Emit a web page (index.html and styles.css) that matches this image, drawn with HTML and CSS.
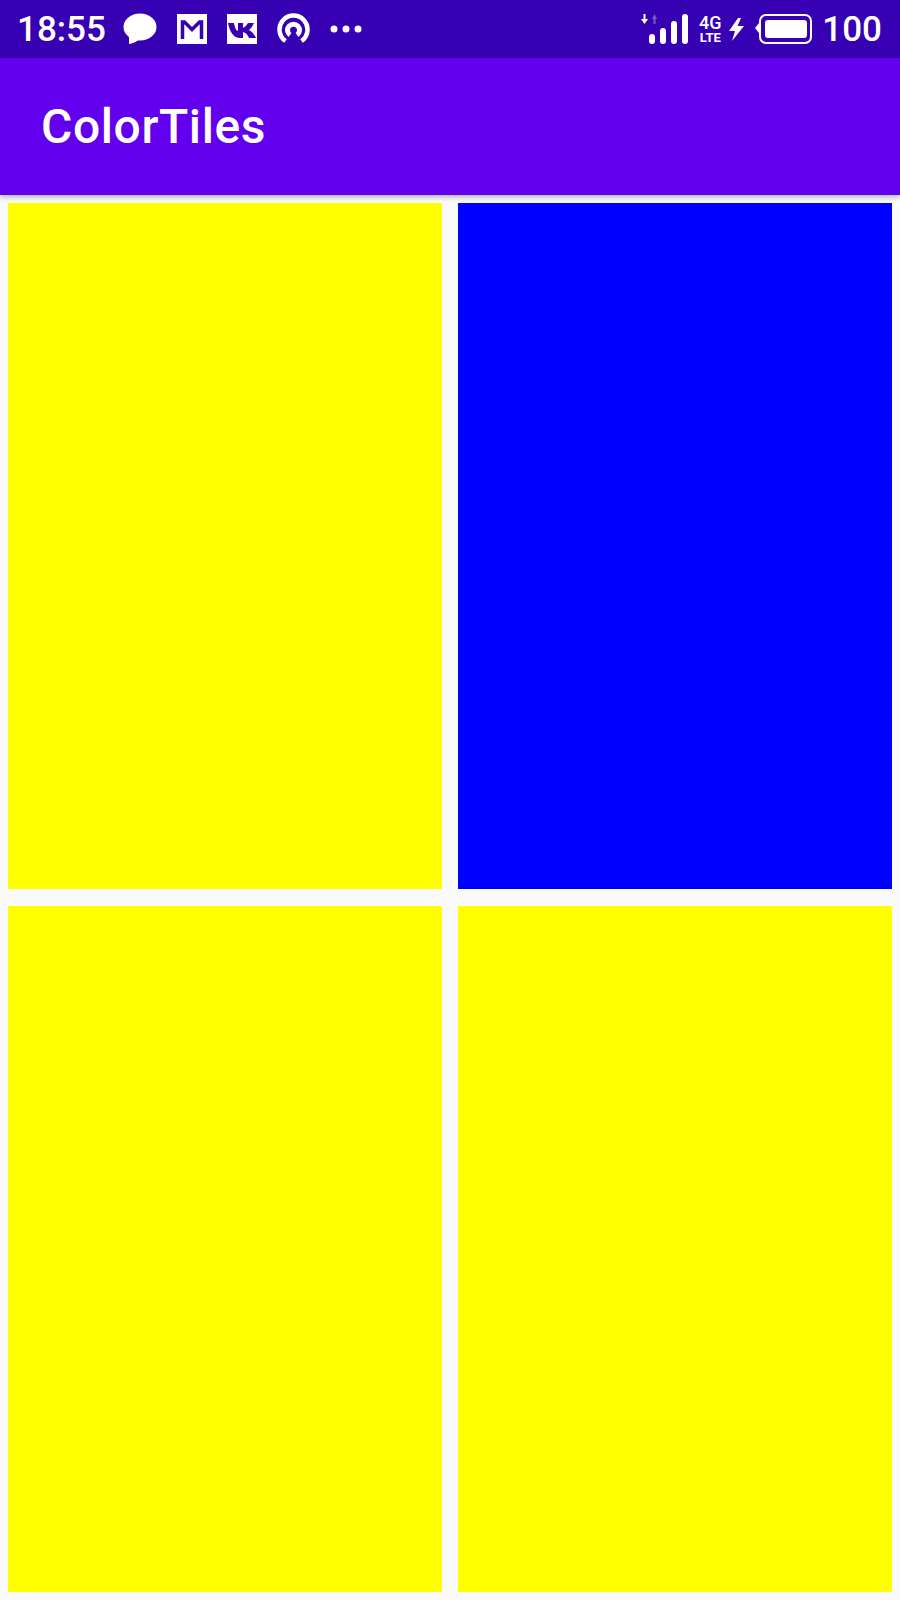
FILE: index.html
```html
<!DOCTYPE html>
<html lang="en">
  <head>
    <meta charset="UTF-8" />
    <meta name="viewport" content="width=device-width, initial-scale=1.0" />
    <title>ColorTiles</title>
    <link rel="stylesheet" href="styles.css">
  </head>
  <body>
    <div class="status-bar">
      <div class="status-left">
        <span class="status-text time">18:55</span>
        <svg class="icon" width="34" height="32" viewBox="0 0 34 32">
          <ellipse cx="17" cy="14" rx="16.5" ry="13.5" fill="#fff" />
          <path d="M6 22 L6 31 Q13 30 18 25 Z" fill="#fff" />
        </svg>
        <svg class="icon" width="30" height="30" viewBox="0 0 30 30">
          <rect width="30" height="30" fill="#fff" />
          <path d="M5.500 25 V8 H7.500 L15 15.500 L22.500 8 H24.500 V25" fill="none" stroke="#3700b3" stroke-width="3.500" />
        </svg>
        <svg class="icon" width="30" height="30" viewBox="0 0 30 30">
          <rect width="30" height="30" fill="#fff" />
          <path d="M1 9 H7 Q8 16 11 17 V9 H16 V14 Q19 13 21 9 H27 Q25 14 22 16 Q26 18 29 24 H22 Q20 19 16 18 V24 H13 Q4 24 1 9 Z" fill="#3700b3" />
          <path d="M30 11 Q26 15 26 16.500 Q26 19 30 22 Z" fill="#fff" />
        </svg>
        <svg class="icon" width="33" height="32" viewBox="0 0 33 32" fill="none" stroke="#fff">
          <path d="M8.500 28 A14 14 0 1 1 24.500 28" stroke-width="4.500" />
          <path d="M13 22 A6 6 0 1 1 20 22" stroke-width="5" />
        </svg>
        <svg class="icon" width="32" height="8" viewBox="0 0 32 8">
          <circle cx="4" cy="4" r="3.500" fill="#fff" />
          <circle cx="16" cy="4" r="3.500" fill="#fff" />
          <circle cx="28" cy="4" r="3.500" fill="#fff" />
        </svg>
      </div>
      <div class="status-right">
        <svg class="icon signal" width="47" height="30" viewBox="0 0 47 30">
          <path d="M2.500 0 H4.500 V5 H7 L3.500 10 L0 5 H2.500 Z" fill="#fff" />
          <path d="M12.500 10 H14.500 V5 H16 L13.500 0 L11 5 H12.500 Z" fill="#7a5cc9" />
          <rect x="8" y="20" width="6" height="10" rx="3" fill="#fff" />
          <rect x="19" y="14" width="6" height="16" rx="3" fill="#fff" />
          <rect x="30" y="7" width="6" height="23" rx="3" fill="#fff" />
          <rect x="41" y="0" width="6" height="30" rx="3" fill="#fff" />
        </svg>
        <div class="network">
          <span class="network-top">4G</span>
          <span class="network-bottom">LTE</span>
        </div>
        <svg class="icon bolt" width="15" height="23" viewBox="0 0 15 23">
          <path d="M9 0 L0 13 H6 L3 23 L15 8 H8.500 L12 0 Z" fill="#fff" />
        </svg>
        <svg class="icon battery" width="57" height="30" viewBox="0 0 57 30">
          <path d="M4 9 L0 14 L4 19 Z" fill="#fff" />
          <rect x="5" y="1" width="51" height="28" rx="6" fill="none" stroke="#fff" stroke-width="2" />
          <rect x="10" y="6" width="42" height="18" rx="3" fill="#fff" />
        </svg>
        <span class="status-text">100</span>
      </div>
    </div>

    <div class="app-bar">
      <h1>ColorTiles</h1>
    </div>

    <div class="tiles">
      <div class="tile yellow"></div>
      <div class="tile blue"></div>
      <div class="tile yellow"></div>
      <div class="tile yellow"></div>
    </div>
  </body>
</html>
```

FILE: styles.css
```css
html,
body {
  height: 100%;
}
body {
  margin: 0;
  display: flex;
  flex-direction: column;
  font-family: Roboto, sans-serif;
  background: #fafafa;
  color: white;
}
.status-bar {
  height: 58px;
  flex-shrink: 0;
  display: flex;
  align-items: center;
  justify-content: space-between;
  padding: 0 18px 0 17px;
  background: #3700b3;
}
.status-left,
.status-right {
  display: flex;
  align-items: center;
}
.status-left {
  gap: 20px;
}
.status-text {
  font-size: 35px;
  font-weight: 500;
  line-height: 40px;
  padding-top: 2px;
}
.time {
  margin-right: -3px;
}
.icon {
  display: block;
  flex-shrink: 0;
}
.network {
  display: flex;
  flex-direction: column;
  align-items: center;
  width: 20px;
  margin-left: 12px;
  font-weight: 500;
}
.network-top {
  font-size: 18px;
  line-height: 18px;
}
.network-bottom {
  font-size: 13px;
  font-weight: 700;
  line-height: 12px;
}
.bolt {
  margin-left: 9px;
}
.battery {
  margin-left: 11px;
}
.battery + .status-text {
  margin-left: 10px;
}
.app-bar {
  height: 137px;
  flex-shrink: 0;
  display: flex;
  align-items: center;
  padding: 0 41px;
  background: #6200ee;
  box-shadow: 0 2px 5px rgba(0, 0, 0, 0.3);
  position: relative;
}
.app-bar h1 {
  margin: 0;
  font-size: 48px;
  font-weight: 500;
  letter-spacing: 0.6px;
}
.tiles {
  flex: 1;
  display: grid;
  grid-template-columns: 1fr 1fr;
  grid-template-rows: 1fr 1fr;
  gap: 17px 16px;
  padding: 8px;
}
.yellow {
  background: #ffff00;
}
.blue {
  background: #0000ff;
}
```
